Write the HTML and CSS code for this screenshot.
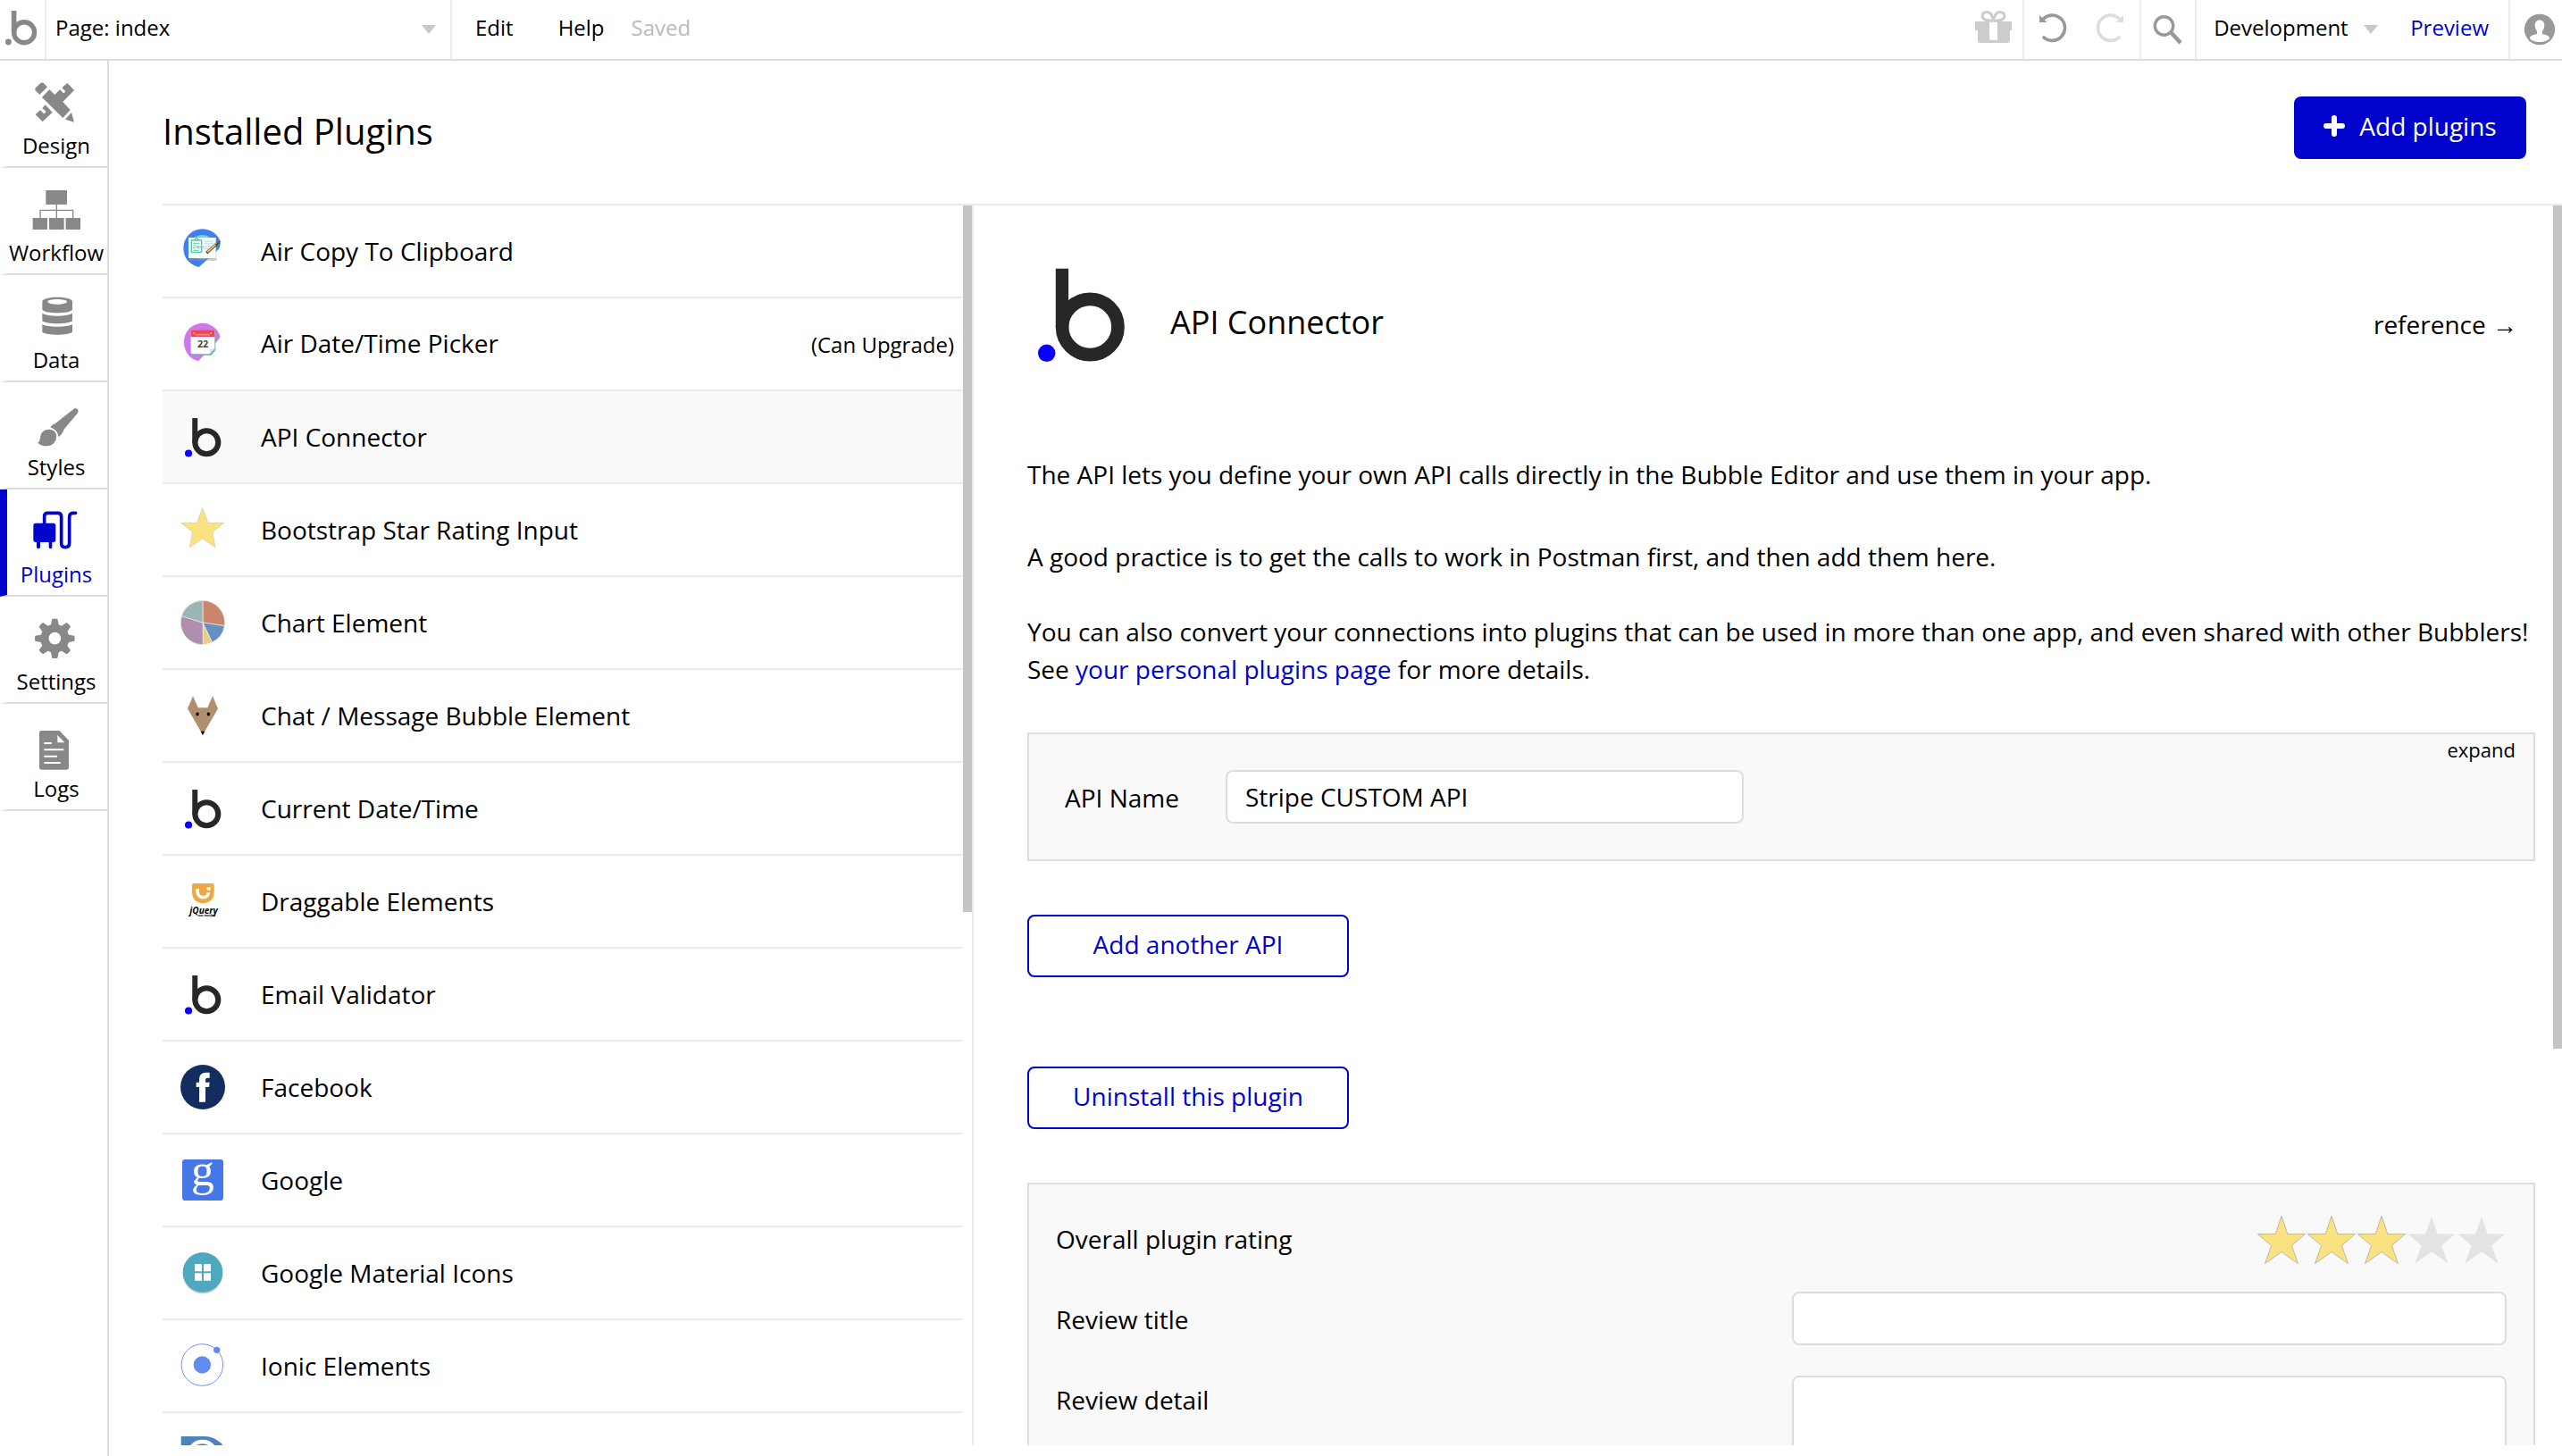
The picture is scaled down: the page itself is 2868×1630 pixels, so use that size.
FILE: index.html
```html
<!DOCTYPE html>
<html lang="en">
<head>
<meta charset="utf-8">
<meta name="viewport" content="width=device-width, initial-scale=1">
<title>Installed Plugins</title>
<link rel="stylesheet" href="styles.css">
</head>
<body>
<svg class="defs" aria-hidden="true">
  <symbol id="bubble" viewBox="0 0 120 120">
    <circle cx="21.7" cy="104.3" r="9.7" fill="#0a00ff"/>
    <rect x="31.8" y="9.7" width="14.3" height="66" fill="#272727"/>
    <circle cx="70.3" cy="75" r="31.2" fill="none" stroke="#272727" stroke-width="14.7"/>
  </symbol>
  <symbol id="star" viewBox="0 0 56 56">
    <path d="M28 1.5 34.8 21.5H54.5L39.3 34.5 46.5 54.5 28 41.5 9.5 54.5 16.7 34.5 1.5 21.5H21.2Z"/>
  </symbol>
</svg>

<div class="app">
  <header class="topbar">
    <a class="topbar-logo" href="#" aria-label="Home">
      <svg width="50" height="66" viewBox="0 0 50 66"><g fill="#888"><circle cx="9.4" cy="47" r="3.4"/><rect x="12.8" y="12" width="5.6" height="24"/></g><circle cx="27.1" cy="36.2" r="11.5" fill="none" stroke="#888" stroke-width="5.4"/></svg>
    </a>
    <div class="picker page-picker">
      <select class="picker-select" aria-label="Page"><option>Page: index</option></select>
      <svg class="caret" width="16" height="10" viewBox="0 0 16 10"><path d="M0 0H16L8 10Z" fill="#c2cad3"/></svg>
    </div>
    <nav class="menu">
      <button class="menu-item">Edit</button>
      <button class="menu-item">Help</button>
      <span class="saved">Saved</span>
    </nav>
    <div class="tools">
      <div class="tool-cell gift">
        <button class="icon-button" aria-label="Gifts"><svg width="44" height="40" viewBox="0 0 44 40"><g fill="#ccc"><path d="M1 14H42V23Q42 24 41 24H40V35Q40 38 37 38H6Q4 38 4 35V24H2Q1 24 1 23Z"/></g><path d="M17 14H26V33Q26 35 24 35H19Q17 35 17 33Z" fill="#fff"/><g fill="none" stroke="#ccc" stroke-width="3"><path d="M21.5 13C20 6 17 3 13.500 3.500C8 4 8 10 12 12C15 13 18 13 21.500 13.500"/><path d="M21.500 13C23 6 26 3 29.500 3.500C35 4 35 10 31 12C28 13 25 13 21.500 13.500"/></g></svg></button>
      </div>
      <div class="tool-cell history">
        <button class="icon-button" aria-label="Undo"><svg width="32" height="36" viewBox="0 0 32 36"><path d="M4.500 8A14.200 14.200 0 1 1 6 28" fill="none" stroke="#999" stroke-width="3.600" stroke-linecap="round"/><path d="M1 3 9.500 11H1Z" fill="#999"/></svg></button>
        <button class="icon-button" aria-label="Redo"><svg width="32" height="36" viewBox="0 0 32 36"><g transform="matrix(-1 0 0 1 32 0)"><path d="M4.500 8A14.200 14.200 0 1 1 6 28" fill="none" stroke="#ddd" stroke-width="3.600" stroke-linecap="round"/><path d="M1 3 9.500 11H1Z" fill="#ddd"/></g></svg></button>
      </div>
      <div class="tool-cell search">
        <button class="icon-button" aria-label="Search"><svg width="34" height="34" viewBox="0 0 34 34"><circle cx="12.500" cy="13" r="10.200" fill="none" stroke="#999" stroke-width="3.400"/><path d="M20 20 31 32" stroke="#999" stroke-width="4.600"/></svg></button>
      </div>
      <div class="tool-cell deploy">
        <div class="picker version-picker">
          <select class="picker-select" aria-label="Version"><option>Development</option></select>
          <svg class="caret" width="16" height="10" viewBox="0 0 16 10"><path d="M0 0H16L8 10Z" fill="#c2cad3"/></svg>
        </div>
        <a class="preview" href="#">Preview</a>
      </div>
      <button class="icon-button account" aria-label="Account"><svg width="36" height="36" viewBox="0 0 36 36"><circle cx="18" cy="18" r="17.200" fill="#999"/><path d="M18 7.500C21.500 7.500 23.300 10 23.300 13.500C23.300 16.500 22 18.500 21 20V23C25 24 29 25 29 27.500C29 30 23 32 18 32C13 32 7 30 7 27.500C7 25 11 24 15 23V20C14 18.500 12.700 16.500 12.700 13.500C12.700 10 14.500 7.500 18 7.500Z" fill="#fff"/></svg></button>
    </div>
  </header>

  <nav class="sidebar">
    <a class="tab" href="#"><svg class="tab-icon" viewBox="105 90 168 156"><path d="M118 122V117L136 99Q141 96 146 99L159 112 133 138ZM141 147 166 121 184 138 201 121 213 133Q219 131 219 126L208 115 226 99 249 123 211 162 236 189 211 216ZM240 198 249 230 219 221ZM119 205 135 190 147 202Q153 200 154 194L142 183 152 172 176 197 143 229Z"/></svg>Design</a>
    <a class="tab" href="#"><svg class="tab-icon" viewBox="105 450 168 156"><path d="M154 459H225V507H154ZM110 552H159V591H110ZM165 552H215V591H165ZM221 552H270V591H221Z"/><path d="M190 507V552M135 552V526H245V552" class="line-thin"/></svg>Workflow</a>
    <a class="tab" href="#"><svg class="tab-icon" viewBox="105 810 168 156"><path fill-rule="evenodd" d="M142 833C142 813 243 813 243 833V860C235 874 150 874 142 860ZM160 833C160 845 225 845 225 833C225 822 160 822 160 833ZM142 872C160 884 225 884 243 872V898C230 910 155 910 142 898ZM142 909C160 920 225 920 243 909V935C230 947 155 947 142 935Z"/></svg>Data</a>
    <a class="tab" href="#"><svg class="tab-icon" viewBox="105 1170 168 156"><path d="M250 1192Q257 1189 262 1196 264 1202 260 1208L214 1263Q212 1276 196 1288 195 1265 169 1255 176 1245 186 1242ZM127 1307C137 1303 132 1285 141 1273C152 1260 175 1259 185 1271C193 1282 190 1300 178 1311C165 1321 140 1321 127 1307Z"/></svg>Styles</a>
    <a class="tab tab-active" href="#" aria-current="page"><svg class="tab-icon" viewBox="105 270 168 156"><path d="M120 317H179Q187 317 187 325V373Q187 381 179 381H175V397Q175 403 169.500 403 164 403 164 397V381H135V397Q135 403 129 403 123 403 123 397V381H120Q112 381 112 373V325Q112 317 120 317Z"/><path d="M149 320V294Q149 283 160 283H194Q206 283 206 295V384Q206 398 219 398 233 398 233 384V297Q233 283 245 283H254" class="line-cable"/></svg>Plugins</a>
    <a class="tab" href="#"><svg class="tab-icon" viewBox="105 630 168 156"><path fill-rule="evenodd" d="M175 638H193L197 658 207 662 223 651Q232 655 237 665L226 681 231 692 250 695Q252 704 250 713L231 717 226 728 237 744Q232 753 223 757L207 746 197 751 193 771H175L171 751 161 746 145 757Q135 752 131 743L142 728 137 717 118 713Q116 704 118 695L137 692 142 681 131 665Q135 656 145 651L161 662 171 658ZM184 683.500A20.500 20.500 0 1 0 184 724.500 20.500 20.500 0 1 0 184 683.500Z"/></svg>Settings</a>
    <a class="tab" href="#"><svg class="tab-icon" viewBox="105 990 168 156"><path d="M139 1014H200L231 1047V1138Q231 1145 224 1145H139Q132 1145 132 1138V1021Q132 1014 139 1014Z"/><path fill="#fff" d="M193 1029 217 1054H193ZM148 1053H174V1059H148ZM148 1075H214V1081H148ZM148 1097H192V1103H148ZM148 1119H203V1125H148Z"/></svg>Logs</a>
  </nav>

  <main class="content">
    <header class="content-header">
      <h1 class="title">Installed Plugins</h1>
      <button class="button button-solid"><svg width="24" height="24" viewBox="0 0 24 24"><path d="M12 3V21M3 12H21" stroke="#fff" stroke-width="6" stroke-linecap="round"/></svg>Add plugins</button>
    </header>

    <div class="panes">
      <section class="list-pane">
        <ul class="plugins">
          <li class="plugin"><a class="plugin-link" href="#"><svg class="plugin-icon" viewBox="96 108 150 150"><path d="M158 237C125 228 106 205 106 173A64 64 0 0 1 229 148Q232 165 225 176Z" fill="#3f80ee"/><circle cx="170" cy="170" r="41" fill="#67dcc0"/><rect x="127" y="142" width="90" height="73" fill="#8894a0" opacity=".5"/><path d="M123 138H215V207H123Z" fill="#f8fbfb"/><path d="M133 147H167V187H133ZM144 147Q150 131 157 147" fill="none" stroke="#5cc4a6" stroke-width="4"/><path d="M139 157H160M139 165H150M139 173H148M139 181H158M151 170H174M158 164 151 170 158 176" fill="none" stroke="#5cc4a6" stroke-width="3"/><path d="M176 151H207M176 158H207" stroke="#8fe0cd" stroke-width="2"/><path d="M176 168H207M176 176H200" stroke="#e0a8ec" stroke-width="2"/><path d="M184 189 226 152" stroke="#222" stroke-width="9"/><path d="M186 187 227 150" stroke="#f4c63c" stroke-width="6"/><path d="M214 163 229 149" stroke="#555" stroke-width="5"/></svg><span class="plugin-text">Air Copy To Clipboard</span></a></li>
          <li class="plugin"><a class="plugin-link" href="#"><svg class="plugin-icon" viewBox="96 420 150 150"><path d="M156 553C125 545 108 520 108 490A62 62 0 0 1 230 472L216 490Z" fill="#cf78ea"/><path d="M134 452H214V516L199 533H140Q132 533 132 525Z" fill="#6fae9c"/><path d="M137 448H205Q211 448 211 454V511L194 529H137Q131 529 131 523V454Q131 448 137 448Z" fill="#fff"/><path d="M137 448H205Q211 448 211 454V471H131V454Q131 448 137 448Z" fill="#ea4657"/><path d="M148 464H194" stroke="#f5a5ac" stroke-width="5" stroke-dasharray="4 2"/><path d="M142 456V462M199 456V462" stroke="#ffd34d" stroke-width="4"/><path d="M194 529V514Q196 510 211 511Z" fill="#dde5e3"/><text x="171" y="507" text-anchor="middle" class="calendar-day">22</text></svg><span class="plugin-text">Air Date/Time Picker<small class="upgrade">(Can Upgrade)</small></span></a></li>
          <li class="plugin plugin-selected"><a class="plugin-link" href="#"><svg class="plugin-icon"><use href="#bubble"/></svg><span class="plugin-text">API Connector</span></a></li>
          <li class="plugin"><a class="plugin-link" href="#"><svg class="plugin-icon" viewBox="96 1044 150 150"><path d="M170 1046 189 1096H242L204 1127 213 1178 170 1149 127 1178 136 1127 98 1096H151Z" fill="#f9e27f" stroke="#ccc8b4" stroke-width="2"/></svg><span class="plugin-text">Bootstrap Star Rating Input</span></a></li>
          <li class="plugin"><a class="plugin-link" href="#"><svg class="plugin-icon" viewBox="96 -24 150 150"><g stroke="#eee" stroke-width="2"><path d="M171 51V-23A74 74 0 0 1 244 62Z" fill="#c9866b"/><path d="M171 51 244 62A74 74 0 0 1 202 117Z" fill="#648fc0"/><path d="M171 51 202 117A74 74 0 0 1 172 125Z" fill="#e8cd8c"/><path d="M171 51 172 125A74 74 0 0 1 100 29Z" fill="#b08fae"/><path d="M171 51 100 29A74 74 0 0 1 171 -23Z" fill="#9bb5b5"/></g></svg><span class="plugin-text">Chart Element</span></a></li>
          <li class="plugin"><a class="plugin-link" href="#"><svg class="plugin-icon" viewBox="96 288 150 150"><path d="M138 298 155 337H187L204 298 222 340 171 428 120 340Z" fill="#b08f6e"/><ellipse cx="153" cy="358.500" rx="5" ry="6"/><ellipse cx="190" cy="358.500" rx="5" ry="6"/><path d="M164 416H178L171 429Z"/></svg><span class="plugin-text">Chat / Message Bubble Element</span></a></li>
          <li class="plugin"><a class="plugin-link" href="#"><svg class="plugin-icon"><use href="#bubble"/></svg><span class="plugin-text">Current Date/Time</span></a></li>
          <li class="plugin"><a class="plugin-link" href="#"><svg class="plugin-icon" viewBox="96 912 150 150"><path d="M140 927H204Q209 927 209 932V956C209 980 193 993 172 993S135 980 135 956V932Q135 927 140 927Z" fill="#efa843"/><path d="M153 945V954C153 980 190 980 190 957" fill="none" stroke="#fff" stroke-width="11"/><path d="M185 940H197V950H185Z" fill="#fff"/><text x="174" y="1029" text-anchor="middle" class="jquery-name">jQuery</text><text x="184" y="1039" text-anchor="middle" class="jquery-sub">user interface</text></svg><span class="plugin-text">Draggable Elements</span></a></li>
          <li class="plugin"><a class="plugin-link" href="#"><svg class="plugin-icon"><use href="#bubble"/></svg><span class="plugin-text">Email Validator</span></a></li>
          <li class="plugin"><a class="plugin-link" href="#"><svg class="plugin-icon" viewBox="96 126 150 150"><circle cx="171" cy="201" r="75" fill="#122d5e"/><path d="M159 251V201H149V185H159V175Q159 152 182 152H194V170H187Q180 170 180 177V185H194L192 201H180V251Z" fill="#fff"/></svg><span class="plugin-text">Facebook</span></a></li>
          <li class="plugin"><a class="plugin-link" href="#"><svg class="plugin-icon" viewBox="96 438 150 150"><rect x="102" y="444" width="138" height="138" rx="10" fill="#4577e8"/><text x="171" y="532" text-anchor="middle" class="google-g">g</text></svg><span class="plugin-text">Google</span></a></li>
          <li class="plugin"><a class="plugin-link" href="#"><svg class="plugin-icon" viewBox="96 750 150 150"><circle cx="171" cy="828" r="67" fill="#ccc"/><circle cx="171" cy="823" r="67" fill="#4ea9bf"/><path d="M144 795H168V820H144ZM174 795H198V820H174ZM144 826H168V851H144ZM174 826H198V851H174Z" fill="#fff"/></svg><span class="plugin-text">Google Material Icons</span></a></li>
          <li class="plugin"><a class="plugin-link" href="#"><svg class="plugin-icon" viewBox="96 1062 150 150"><circle cx="169" cy="1134" r="70" fill="none" stroke="#6b95f2" stroke-width="3"/><circle cx="169" cy="1134" r="29" fill="#5e8cf1"/><circle cx="218" cy="1084" r="11" fill="#5e8cf1"/></svg><span class="plugin-text">Ionic Elements</span></a></li>
          <li class="plugin"><a class="plugin-link" href="#"><svg class="plugin-icon" viewBox="96 1374 150 150"><path d="M98 1374H178A68 68 0 0 1 178 1524H98Z" fill="#4f82c0"/><circle cx="170" cy="1440" r="48" fill="none" stroke="#fff" stroke-width="13"/></svg></a></li>
        </ul>
        <div class="scrollbar"><div class="thumb thumb-list"></div></div>
      </section>

      <section class="detail-pane">
        <div class="detail">
          <header class="detail-header">
            <svg class="detail-icon"><use href="#bubble"/></svg>
            <div class="detail-heading">
              <h2 class="detail-title">API Connector</h2>
              <a class="reference" href="#">reference <span class="arrow">→</span></a>
            </div>
          </header>
          <div class="prose">
            <p class="intro">The API lets you define your own API calls directly in the Bubble Editor and use them in your app.</p>
            <p class="practice">A good practice is to get the calls to work in Postman first, and then add them here.</p>
            <p>You can also convert your connections into plugins that can be used in more than one app, and even shared with other Bubblers! See <a class="link" href="#">your personal plugins page</a> for more details.</p>
          </div>
          <div class="box api">
            <label class="api-label" for="api-name">API Name</label>
            <input class="field api-field" id="api-name" type="text" value="Stripe CUSTOM API">
            <button class="expand">expand</button>
          </div>
          <button class="button button-outline">Add another API</button>
          <button class="button button-outline uninstall">Uninstall this plugin</button>
          <form class="box review">
            <div class="review-row">
              <span class="review-label" id="rating-label">Overall plugin rating</span>
              <div class="rating" role="radiogroup" aria-labelledby="rating-label">
                <label class="rate rate-on"><input class="rate-input" type="radio" name="rating" aria-label="1 star"><svg class="star"><use href="#star"/></svg></label>
                <label class="rate rate-on"><input class="rate-input" type="radio" name="rating" aria-label="2 stars"><svg class="star"><use href="#star"/></svg></label>
                <label class="rate rate-on"><input class="rate-input" type="radio" name="rating" aria-label="3 stars" checked><svg class="star"><use href="#star"/></svg></label>
                <label class="rate"><input class="rate-input" type="radio" name="rating" aria-label="4 stars"><svg class="star"><use href="#star"/></svg></label>
                <label class="rate"><input class="rate-input" type="radio" name="rating" aria-label="5 stars"><svg class="star"><use href="#star"/></svg></label>
              </div>
            </div>
            <div class="review-row">
              <label class="review-label" for="review-title">Review title</label>
              <input class="field review-field" id="review-title" type="text">
            </div>
            <div class="review-row">
              <label class="review-label" for="review-detail">Review detail</label>
              <textarea class="field review-field review-area" id="review-detail"></textarea>
            </div>
          </form>
        </div>
        <div class="scrollbar"><div class="thumb thumb-detail"></div></div>
      </section>
    </div>
  </main>
</div>
</body>
</html>
```
FILE: styles.css
```css
* { box-sizing: border-box; }

body {
  margin: 0;
  background: #fff;
  color: #000;
  font: 28px/42px "Open Sans", sans-serif;
}

button, input, textarea, select { font: inherit; color: inherit; }
button { padding: 0; border: 0; background: none; cursor: pointer; }
a { color: inherit; text-decoration: none; }
h1, h2, p, ul { margin: 0; padding: 0; font-weight: 400; }
svg { display: block; flex: none; }
.defs { position: absolute; width: 0; height: 0; }

.app {
  display: grid;
  grid-template: auto minmax(0, 1fr) / 122px minmax(0, 1fr);
  height: 100vh;
  overflow: hidden;
}

/* Top bar */
.topbar {
  grid-column: 1 / -1;
  display: flex;
  height: 68px;
  border-bottom: 2px solid #ddd;
  font-size: 24px;
  line-height: 32px;
}
.topbar-logo { border-right: 2px solid #e8edf0; }
.picker { display: grid; align-items: center; }
.picker > * { grid-area: 1 / 1; }
.picker-select {
  appearance: none;
  width: 100%;
  height: 100%;
  border: 0;
  background: none;
  padding: 0 0 4px;
}
.caret { justify-self: end; pointer-events: none; }
.page-picker { width: 454px; border-right: 2px solid #e8edf0; }
.page-picker .picker-select { padding-left: 10px; }
.page-picker .caret { margin-right: 16px; }
.menu { display: flex; align-items: center; padding: 0 0 4px 26px; }
.menu-item { margin-right: 50px; }
.menu-item + .saved { margin-left: -20px; }
.saved { color: #bbb; }
.tools { display: flex; margin-left: auto; }
.tool-cell {
  display: flex;
  align-items: center;
  border-right: 2px solid #e8edf0;
}
.gift { padding: 0 10px 6px 0; }
.history { gap: 32px; padding: 0 17px 2px 16px; }
.search { padding: 0 13px; }
.deploy { padding-left: 19px; }
.version-picker { width: 184px; height: 100%; }
.preview { padding: 0 22px 4px 36px; color: #0003cb; }
.account { padding: 0 7px 0 15px; }

/* Sidebar */
.sidebar { border-right: 2px solid #ddd; }
.tab {
  display: flex;
  flex-direction: column;
  align-items: center;
  height: 120px;
  padding: 22px 2px 0 0;
  border-bottom: 2px solid #ddd;
  border-left: 8px solid transparent;
  font-size: 24px;
  line-height: 32px;
  gap: 5px;
}
.tab-icon { width: 56px; height: 52px; fill: #888; }
.line-thin { fill: none; stroke: #888; stroke-width: 4; }
.line-cable { fill: none; stroke: #0003cb; stroke-width: 11; stroke-linecap: round; }
.tab-active { border-left-color: #0003cb; color: #0003cb; }
.tab-active .tab-icon { fill: #0003cb; }

/* Content */
.content {
  display: flex;
  flex-direction: column;
  min-height: 0;
  padding: 0 0 12px 60px;
}
.content-header {
  display: flex;
  align-items: center;
  justify-content: space-between;
  height: 162px;
  flex: none;
  padding: 0 40px 10px 0;
  border-bottom: 2px solid #ebebeb;
}
.title { padding-top: 8px; font-size: 40px; line-height: 54px; }
.button { height: 70px; border-radius: 8px; }
.button-solid {
  display: flex;
  align-items: center;
  justify-content: center;
  gap: 16px;
  width: 260px;
  padding-bottom: 4px;
  background: #0003cb;
  color: #fff;
}
.button-outline {
  display: block;
  width: 360px;
  margin-top: 60px;
  padding-bottom: 4px;
  border: 2px solid #0003cb;
  color: #0003cb;
}
.uninstall { margin-top: 100px; }

.panes {
  display: grid;
  grid-template-columns: 908px minmax(0, 1fr);
  grid-template-rows: minmax(0, 1fr);
  flex: 1;
  min-height: 0;
}
.scrollbar { flex: none; width: 10px; }
.thumb { background: #c5c5c5; }
.thumb-list { height: 57%; }
.thumb-detail { height: 68%; }

/* Plugin list */
.list-pane { display: flex; overflow: hidden; border-right: 2px solid #ebebeb; }
.plugins { flex: 1; list-style: none; }
.plugin { border-bottom: 2px solid #ebebeb; }
.plugin-selected { background: #f9f9f9; }
.plugin-link {
  display: flex;
  align-items: center;
  gap: 40px;
  height: 102px;
  padding: 0 10px 0 20px;
}
.plugin-icon { width: 50px; height: 50px; }
.plugin-text { display: flex; flex: 1; align-items: baseline; justify-content: space-between; }
.upgrade { font-size: 24px; }
.calendar-day { font: bold 32px "Open Sans", sans-serif; fill: #444; }
.jquery-name { font: italic bold 30px "Open Sans", sans-serif; }
.jquery-sub { font: italic bold 9px "Open Sans", sans-serif; }
.google-g { font: 155px "Liberation Serif", serif; fill: #fff; }

/* Plugin detail */
.detail-pane { display: flex; overflow: hidden; }
.detail { flex: 1; min-width: 0; padding: 61px 20px 0 60px; }
.detail-header { display: flex; align-items: center; gap: 40px; }
.detail-icon { width: 120px; height: 120px; }
.detail-heading {
  display: flex;
  flex: 1;
  align-items: baseline;
  justify-content: space-between;
  padding: 20px 20px 0 0;
}
.detail-title { font-size: 36px; line-height: 48px; }
.arrow { font-family: "Liberation Serif", serif; }
.prose { padding: 99px 0 50px; }
.intro { margin-bottom: 50px; }
.practice { margin-bottom: 42px; }
.link { color: #0003cb; }

.box { border: 2px solid #ddd; background: #f9f9f9; }
.field {
  height: 60px;
  padding: 0 20px;
  border: 2px solid #ddd;
  border-radius: 8px;
  background: #fff;
}
.api { display: flex; align-items: flex-start; height: 144px; padding: 0 20px 0 40px; }
.api-label { width: 180px; padding-top: 50px; }
.api-field { width: 580px; margin-top: 40px; }
.expand { margin-left: auto; font-size: 22px; line-height: 34px; }

.review { margin-top: 60px; padding: 30px 30px 40px; }
.review-row { display: flex; align-items: flex-start; justify-content: space-between; min-height: 90px; }
.review-label { padding-top: 10px; }
.review-field { width: 800px; }
.review-row:nth-child(3) .review-field { margin-top: 4px; }
.review-area { height: 240px; padding: 10px 20px; }
.rating { display: flex; padding-top: 4px; }
.rate { display: block; }
.rate-input { position: absolute; opacity: 0; }
.star { width: 56px; height: 56px; fill: #e3e3e3; }
.rate-on .star { fill: #f9e27f; stroke: #bdb9a4; stroke-width: 1; }
```
